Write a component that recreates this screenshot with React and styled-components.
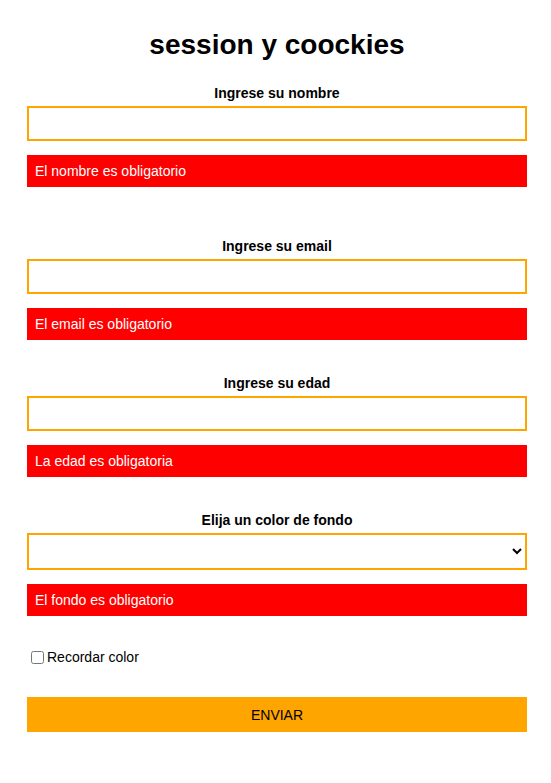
import React from 'react'
import styled, { createGlobalStyle } from 'styled-components'

const fields = [
    { id: 'nombre', label: 'Ingrese su nombre', error: 'El nombre es obligatorio', gap: 24 },
    { id: 'email', label: 'Ingrese su email', error: 'El email es obligatorio', gap: 51 },
    { id: 'edad', label: 'Ingrese su edad', error: 'La edad es obligatoria', gap: 35 },
]

function App() {
    return (
        <>
            <GlobalStyle />
            <Page>
                <Title>session y coockies</Title>
                <Form onSubmit={(e) => e.preventDefault()}>
                    {fields.map((f) => (
                        <Field key={f.id} $gap={f.gap}>
                            <Label htmlFor={f.id}>{f.label}</Label>
                            <Input id={f.id} type="text" />
                            <Error>{f.error}</Error>
                        </Field>
                    ))}
                    <Field $gap={35}>
                        <Label htmlFor="fondo">Elija un color de fondo</Label>
                        <Select id="fondo" defaultValue="">
                            <option value=""></option>
                            <option value="red">Rojo</option>
                            <option value="blue">Azul</option>
                        </Select>
                        <Error>El fondo es obligatorio</Error>
                    </Field>
                    <CheckRow>
                        <input type="checkbox" id="recordar" />
                        <label htmlFor="recordar">Recordar color</label>
                    </CheckRow>
                    <Button type="submit">ENVIAR</Button>
                </Form>
            </Page>
        </>
    )
}

export default App

const GlobalStyle = createGlobalStyle`
    body {
        margin: 0;
        background: #fff;
        font-family: "Liberation Sans", Arial, sans-serif;
        color: #000;
    }
`

const Page = styled.div`
    padding: 29px 24px 40px 27px;
`

const Title = styled.h1`
    margin: 0;
    width: 500px;
    font-size: 28px;
    line-height: 32px;
    font-weight: bold;
    text-align: center;
`

const Form = styled.form`
    width: 500px;
    display: flex;
    flex-direction: column;
`

const Field = styled.div`
    display: flex;
    flex-direction: column;
    margin-top: ${(p) => p.$gap}px;
`

const Label = styled.label`
    font-size: 14px;
    line-height: 16px;
    font-weight: bold;
    text-align: center;
    margin-bottom: 5px;
`

const Input = styled.input`
    box-sizing: border-box;
    width: 100%;
    height: 35px;
    border: 2px solid #ffa500;
    border-radius: 0;
    outline: none;
    font-family: inherit;
    font-size: 14px;
    padding: 0 8px;
`

const Select = styled.select`
    box-sizing: border-box;
    width: 100%;
    height: 37px;
    border: 2px solid #ffa500;
    border-radius: 0;
    background: #fff;
    outline: none;
    font-family: inherit;
    font-size: 14px;
`

const Error = styled.div`
    margin-top: 14px;
    height: 32px;
    display: flex;
    align-items: center;
    padding: 0 8px;
    background: #ff0000;
    color: #fff;
    font-size: 14px;
`

const CheckRow = styled.div`
    margin-top: 33px;
    display: flex;
    align-items: center;
    font-size: 14px;
    line-height: 16px;

    input {
        margin: 0 3px 0 4px;
        width: 13px;
        height: 13px;
    }
`

const Button = styled.button`
    margin-top: 32px;
    height: 35px;
    width: 100%;
    border: none;
    border-radius: 0;
    background: #ffa500;
    color: #000;
    font-family: inherit;
    font-size: 14px;
    cursor: pointer;
`
